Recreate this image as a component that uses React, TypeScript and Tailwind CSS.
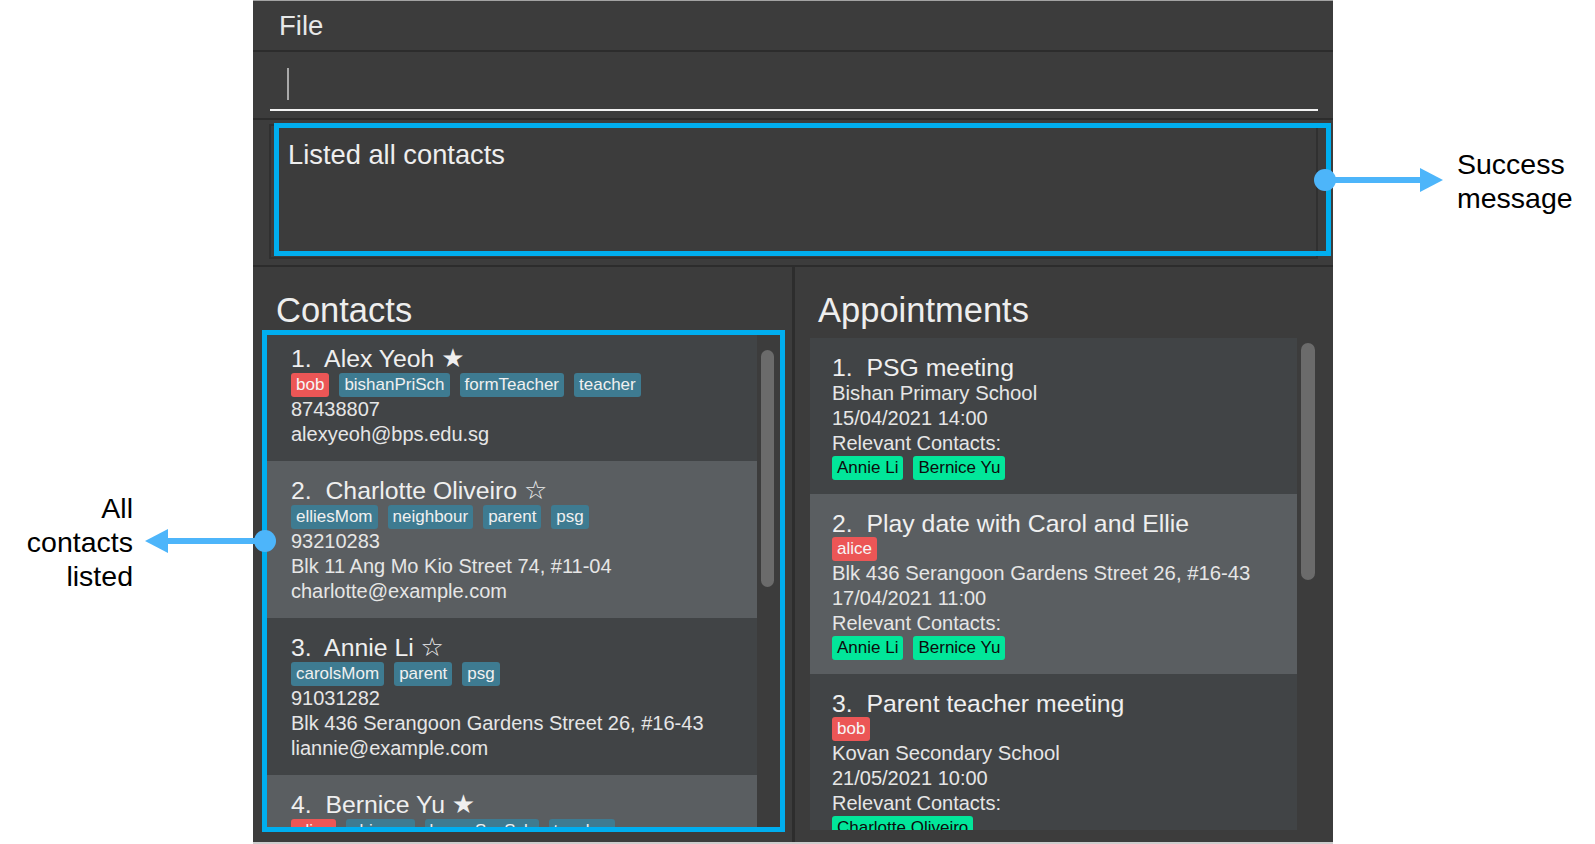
type TagKind = 'red' | 'blue' | 'green';
type Tag = { label: string; kind: TagKind };

type Contact = {
  name: string;
  fav: boolean;
  tags: Tag[];
  phone: string;
  address?: string;
  email: string;
};

type Appointment = {
  title: string;
  tags: Tag[];
  location: string;
  when: string;
  contacts: string[];
};

const red = (label: string): Tag => ({ label, kind: 'red' });
const blue = (label: string): Tag => ({ label, kind: 'blue' });

const contacts: Contact[] = [
  {
    name: 'Alex Yeoh',
    fav: true,
    tags: [red('bob'), blue('bishanPriSch'), blue('formTeacher'), blue('teacher')],
    phone: '87438807',
    email: 'alexyeoh@bps.edu.sg',
  },
  {
    name: 'Charlotte Oliveiro',
    fav: false,
    tags: [blue('elliesMom'), blue('neighbour'), blue('parent'), blue('psg')],
    phone: '93210283',
    address: 'Blk 11 Ang Mo Kio Street 74, #11-04',
    email: 'charlotte@example.com',
  },
  {
    name: 'Annie Li',
    fav: false,
    tags: [blue('carolsMom'), blue('parent'), blue('psg')],
    phone: '91031282',
    address: 'Blk 436 Serangoon Gardens Street 26, #16-43',
    email: 'liannie@example.com',
  },
  {
    name: 'Bernice Yu',
    fav: true,
    tags: [red('alice'), blue('chinese'), blue('kovanSecSch'), blue('teacher')],
    phone: '99272758',
    email: 'berniceyu@kss.edu.sg',
  },
];

const appointments: Appointment[] = [
  {
    title: 'PSG meeting',
    tags: [],
    location: 'Bishan Primary School',
    when: '15/04/2021 14:00',
    contacts: ['Annie Li', 'Bernice Yu'],
  },
  {
    title: 'Play date with Carol and Ellie',
    tags: [red('alice')],
    location: 'Blk 436 Serangoon Gardens Street 26, #16-43',
    when: '17/04/2021 11:00',
    contacts: ['Annie Li', 'Bernice Yu'],
  },
  {
    title: 'Parent teacher meeting',
    tags: [red('bob')],
    location: 'Kovan Secondary School',
    when: '21/05/2021 10:00',
    contacts: ['Charlotte Oliveiro'],
  },
];

const tagClass: Record<TagKind, string> = {
  red: 'bg-[#ec5656] text-[#f6f6f6]',
  blue: 'bg-[#3e7b91] text-[#f0f0f0]',
  green: 'bg-[#02e69a] text-[#0c0c0c]',
};

function TagChip({ tag }: { tag: Tag }) {
  return (
    <span className={`h-[24px] px-[5px] rounded-[3px] text-[17px] leading-[24px] ${tagClass[tag.kind]}`}>
      {tag.label}
    </span>
  );
}

function TagRow({ tags, className = '' }: { tags: Tag[]; className?: string }) {
  return (
    <div className={`flex gap-[10px] h-[24px] ${className}`}>
      {tags.map((t) => (
        <TagChip key={t.label} tag={t} />
      ))}
    </div>
  );
}

const rowText = 'text-[20px] leading-[25px] text-[#e6e6e6]';
const titleText = 'text-[24.8px] leading-[26px] text-[#efefef] whitespace-pre';

function ContactCard({ c, i }: { c: Contact; i: number }) {
  return (
    <div className={`${i % 2 === 0 ? 'bg-[#414446]' : 'bg-[#5a5e61]'} pl-[24px] pt-[16px] pb-[14px]`}>
      <div className={titleText}>
        {`${i + 1}.  ${c.name} `}
        <span className="font-['DejaVu_Sans',sans-serif] text-[26px] leading-[26px]">{c.fav ? '★' : '☆'}</span>
      </div>
      <TagRow tags={c.tags} className="mt-[1px]" />
      <div className={rowText}>{c.phone}</div>
      {c.address && <div className={rowText}>{c.address}</div>}
      <div className={rowText}>{c.email}</div>
    </div>
  );
}

function AppointmentCard({ a, i }: { a: Appointment; i: number }) {
  return (
    <div className={`${i % 2 === 0 ? 'bg-[#414446]' : 'bg-[#5a5e61]'} pl-[22px] pt-[17px] pb-[14px]`}>
      <div className={titleText}>{`${i + 1}.  ${a.title}`}</div>
      {a.tags.length > 0 && <TagRow tags={a.tags} />}
      <div className="text-[20.3px] leading-[25px] text-[#e6e6e6]">{a.location}</div>
      <div className={rowText}>{a.when}</div>
      <div className={rowText}>Relevant Contacts:</div>
      <TagRow tags={a.contacts.map((n) => ({ label: n, kind: 'green' as TagKind }))} />
    </div>
  );
}

function Arrows() {
  return (
    <svg
      className="absolute left-0 top-0 pointer-events-none"
      width="1595"
      height="844"
      viewBox="0 0 1595 844"
      aria-hidden
    >
      <g fill="#4db5fa">
        <circle cx="265" cy="541" r="11" />
        <rect x="166" y="538" width="99" height="6" />
        <polygon points="145,541 168,529 168,553" />
        <circle cx="1325" cy="180" r="11" />
        <rect x="1325" y="177" width="97" height="6" />
        <polygon points="1443,180 1420,168 1420,192" />
      </g>
    </svg>
  );
}

export default function App() {
  return (
    <div className="relative w-[1595px] h-[844px] overflow-hidden bg-white flex font-['Liberation_Sans',Arial,sans-serif]">
      <div className="w-[253px] shrink-0 pt-[491px] pr-[120px] text-right text-[28.5px] leading-[34px] text-black">
        <p>All</p>
        <p>contacts</p>
        <p>listed</p>
      </div>

      <div className="w-[1080px] h-[844px] shrink-0 flex flex-col bg-[#3c3c3c] border-t border-[#a3a3a3] border-b-2 border-b-[#cdcdcd]">
        {/* menu bar */}
        <div className="h-[51px] shrink-0 flex items-center pl-[26px] border-b-2 border-[#2c2c2c]">
          <span className="text-[27.5px] text-[#e8e8e8]">File</span>
        </div>

        {/* command box */}
        <div className="h-[68px] shrink-0 pt-[16px] pl-[17px] pr-[15px] border-b-2 border-[#2c2c2c]">
          <div className="border-b-2 border-[#f2f2f2] pb-[9px] pl-[17px]">
            <div className="w-[2px] h-[32px] bg-[#a9a9a9]" />
          </div>
        </div>

        {/* result display */}
        <div className="relative h-[147px] shrink-0 pt-[4px] pl-[16px] pr-[15px] border-b-2 border-[#2c2c2c]">
          <div className="h-[135px] border-2 border-[#303030] pl-[17px] pt-[13px]">
            <p className="text-[27.3px] leading-[32px] text-[#eeeeee]">Listed all contacts</p>
          </div>
          <div className="absolute left-[21px] top-[3px] w-[1057px] h-[133px] border-[5px] border-[#00aeef]" />
        </div>

        {/* panels */}
        <div className="flex-1 min-h-0 flex">
          <div className="w-[542px] shrink-0 border-r-[3px] border-[#2d2d2d] pt-[23px]">
            <h2 className="pl-[23px] text-[34.5px] leading-[40px] text-[#eeeeee]">Contacts</h2>
            <div className="relative ml-[14px] mt-[5px] w-[513px] h-[492px]">
              <div className="flex h-full overflow-hidden">
                <div className="w-[490px] shrink-0 overflow-hidden">
                  <div className="-mt-[6px]">
                    {contacts.map((c, i) => (
                      <ContactCard key={c.name} c={c} i={i} />
                    ))}
                  </div>
                </div>
                <div className="ml-[4px] w-[13px]">
                  <div className="mt-[15px] h-[237px] rounded-full bg-[#6b6b6b]" />
                </div>
              </div>
              <div className="absolute -inset-[5px] border-[5px] border-[#00aeef]" />
            </div>
          </div>

          <div className="flex-1 pt-[23px]">
            <h2 className="pl-[23px] text-[34.5px] leading-[40px] text-[#eeeeee]">Appointments</h2>
            <div className="ml-[15px] mt-[8px] w-[505px] h-[492px] flex overflow-hidden">
              <div className="w-[487px] shrink-0 overflow-hidden">
                {appointments.map((a, i) => (
                  <AppointmentCard key={a.title} a={a} i={i} />
                ))}
              </div>
              <div className="ml-[4px] w-[14px]">
                <div className="mt-[5px] h-[237px] rounded-full bg-[#6b6b6b]" />
              </div>
            </div>
          </div>
        </div>
      </div>

      <div className="flex-1 pt-[147px] pl-[124px] text-[28.5px] leading-[34px] text-black">
        <p>Success</p>
        <p>message</p>
      </div>

      <Arrows />
    </div>
  );
}
